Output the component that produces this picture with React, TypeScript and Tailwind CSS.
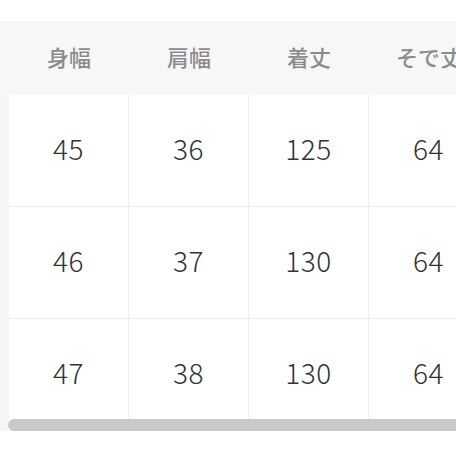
const headers = ['身幅', '肩幅', '着丈', 'そで丈'];

const rows = [
  ['45', '36', '125', '64'],
  ['46', '37', '130', '64'],
  ['47', '38', '130', '64'],
];

const font = { fontFamily: '"Noto Sans CJK JP", "Noto Sans", sans-serif' };

export default function App() {
  return (
    <div className="w-[456px] h-[456px] bg-white overflow-hidden pt-[22px]" style={font}>
      <div className="relative flex flex-col w-max">
        <div className="flex h-[73px] bg-[#f7f7f7] border-t border-[#f0f0f0]">
          <div className="w-[9px] shrink-0" />
          {headers.map((h) => (
            <div
              key={h}
              className="w-[120px] shrink-0 flex items-center justify-center text-[22px] font-medium text-[#8c8c8c] pb-[6px]"
            >
              {h}
            </div>
          ))}
        </div>
        {rows.map((r, i) => (
          <div key={i} className="flex h-[112px]">
            <div className="w-[9px] shrink-0 bg-[#f6f6f6]" />
            {r.map((v, j) => (
              <div
                key={j}
                className="w-[120px] shrink-0 flex items-center justify-center bg-white border-r border-b border-[#efefef] text-[28px] text-[#333] font-light tracking-[0.5px] pb-[6px]"
              >
                {v}
              </div>
            ))}
          </div>
        ))}
        {/* horizontal scrollbar thumb */}
        <div className="absolute bottom-0 left-[8px] w-[480px] h-[12px] bg-[#c9c9c9] rounded-l-full" />
      </div>
    </div>
  );
}
